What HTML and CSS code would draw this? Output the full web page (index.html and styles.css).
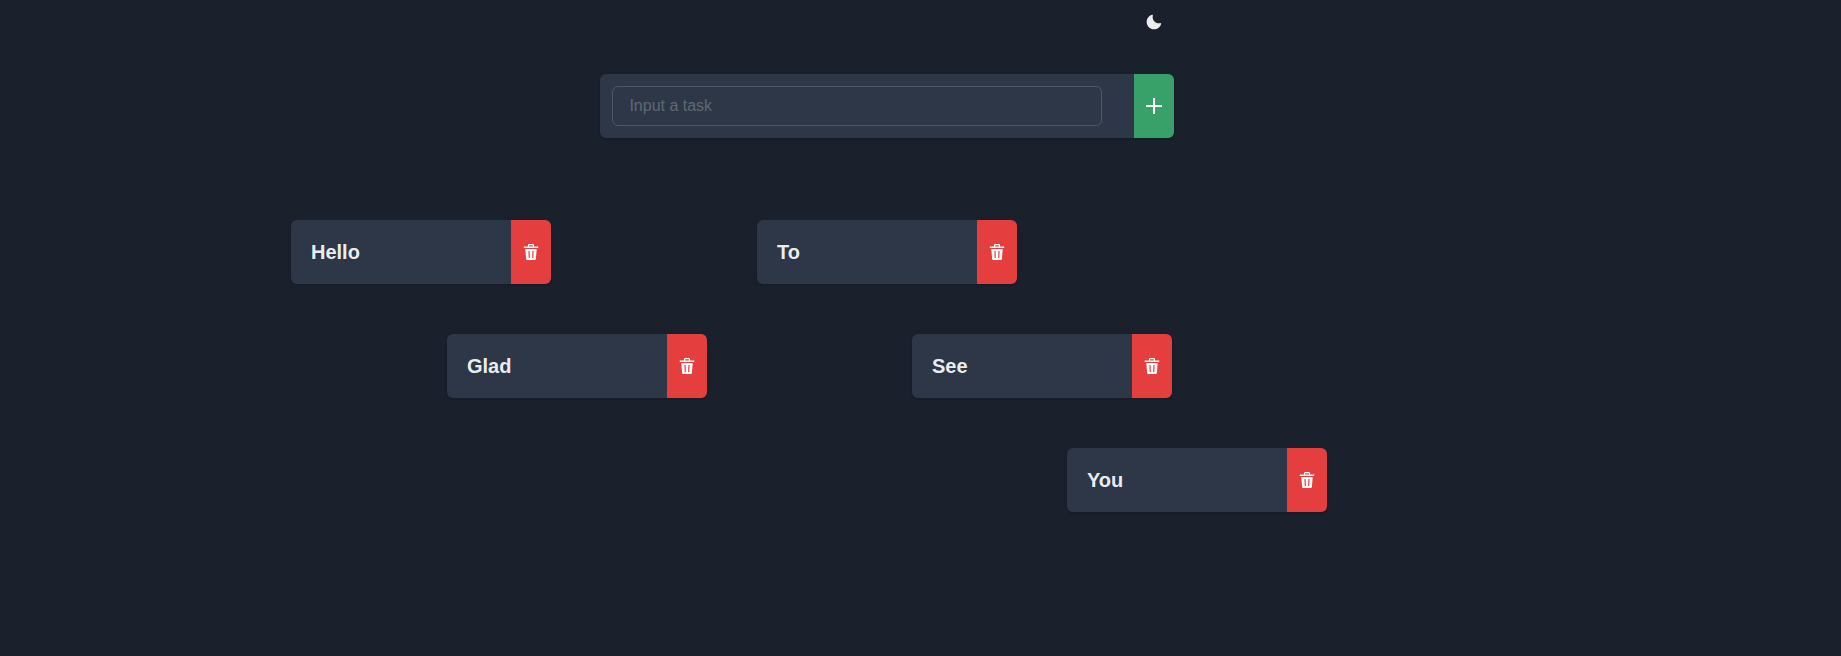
FILE: index.html
```html
<!DOCTYPE html>
<html lang="en">
<head>
<meta charset="utf-8">
<title>Tasks</title>
<link rel="stylesheet" href="styles.css">
</head>
<body>
<svg class="defs" aria-hidden="true">
  <symbol id="trash" viewBox="0 0 16 16">
    <path fill-rule="evenodd" d="M5 2.4V1.4C5 .6 5.5 0 6.3 0h3.4c.8 0 1.3.6 1.3 1.4v1h3.8c.4 0 .7.3.7.7s-.3.8-.7.8H1.2c-.4 0-.7-.4-.7-.8s.3-.7.7-.7zM6.2 2.4h3.6V1.2H6.2zM2.3 5h11.4l-.8 9.7c-.1.8-.6 1.3-1.4 1.3h-7c-.8 0-1.3-.5-1.4-1.3zM5.4 7l.3 7h1.2L6.6 7zM9.4 7l-.3 7h1.2l.3-7z"/>
  </symbol>
</svg>
<main class="page">
  <header class="toolbar">
    <button class="theme" aria-label="Toggle theme"><svg class="icon" viewBox="0 0 24 24"><path d="M21.4,13.7C20.6,13.9,19.8,14,19,14c-5,0-9-4-9-9c0-0.8,0.1-1.6,0.3-2.4c0.1-0.3,0-0.7-0.3-1c-0.3-0.3-0.6-0.4-1-0.3C4.3,2.7,1,7.1,1,12c0,6.1,4.9,11,11,11c4.9,0,9.3-3.3,10.6-8.1c0.1-0.3,0-0.7-0.3-1C22.1,13.7,21.7,13.6,21.4,13.7z"/></svg></button>
  </header>
  <form class="card entry">
    <input class="field" type="text" placeholder="Input a task">
    <button class="action add" type="button" aria-label="Add"><svg class="icon" viewBox="0 0 16 16"><path d="M7 0h2v7h7v2H9v7H7V9H0V7h7z"/></svg></button>
  </form>
  <section class="board">
    <article class="card task hello"><h2 class="title">Hello</h2><button class="action remove" aria-label="Delete"><svg class="icon"><use href="#trash"/></svg></button></article>
    <article class="card task to"><h2 class="title">To</h2><button class="action remove" aria-label="Delete"><svg class="icon"><use href="#trash"/></svg></button></article>
    <article class="card task glad"><h2 class="title">Glad</h2><button class="action remove" aria-label="Delete"><svg class="icon"><use href="#trash"/></svg></button></article>
    <article class="card task see"><h2 class="title">See</h2><button class="action remove" aria-label="Delete"><svg class="icon"><use href="#trash"/></svg></button></article>
    <article class="card task you"><h2 class="title">You</h2><button class="action remove" aria-label="Delete"><svg class="icon"><use href="#trash"/></svg></button></article>
  </section>
</main>
</body>
</html>
```
FILE: styles.css
```css
* { box-sizing: border-box; margin: 0; }
body {
  background: #1a202c;
  color: rgba(255, 255, 255, 0.92);
  font-family: "Liberation Sans", Arial, sans-serif;
  font-size: 16px;
  overflow: hidden;
}
.defs { display: none; }
.page { min-height: 656px; padding-top: 2px; }
.toolbar, .entry { width: 574px; margin-left: 600.4px; }
.toolbar { display: flex; justify-content: flex-end; }
button { border: 0; padding: 0; color: inherit; cursor: pointer; }
.theme, .action {
  display: flex;
  align-items: center;
  justify-content: center;
  width: 40px;
  flex: none;
}
.theme { height: 40px; background: transparent; }
.icon { width: 16px; height: 16px; fill: currentColor; display: block; }
.card {
  display: flex;
  height: 64px;
  background: #2d3748;
  border-radius: 6px;
  overflow: hidden;
  box-shadow: 0 1px 3px rgba(0, 0, 0, 0.1), 0 1px 2px rgba(0, 0, 0, 0.06);
}
.entry { margin-top: 32px; justify-content: space-between; align-items: center; padding-left: 12px; }
.field {
  width: 490px;
  height: 40px;
  padding: 0 16px;
  border: 1px solid rgba(255, 255, 255, 0.16);
  border-radius: 6px;
  background: transparent;
  color: inherit;
  font: inherit;
}
.field::placeholder { color: #606873; opacity: 1; }
.action { height: 64px; color: #fff; }
.add { background: #38a169; }
.remove { background: #e53e3e; }
.board {
  display: grid;
  grid-template-columns: 156px repeat(5, 155px);
  grid-auto-rows: 64px;
  row-gap: 50px;
  padding: 82px 0 0 291px;
}
.task { width: 260px; align-items: center; justify-content: space-between; }
.title { padding-left: 20px; font-size: 20px; line-height: 24px; font-weight: 700; }
.hello { grid-area: 1 / 1; }
.to { grid-area: 1 / 4; }
.glad { grid-area: 2 / 2; }
.see { grid-area: 2 / 5; }
.you { grid-area: 3 / 6; }
```
